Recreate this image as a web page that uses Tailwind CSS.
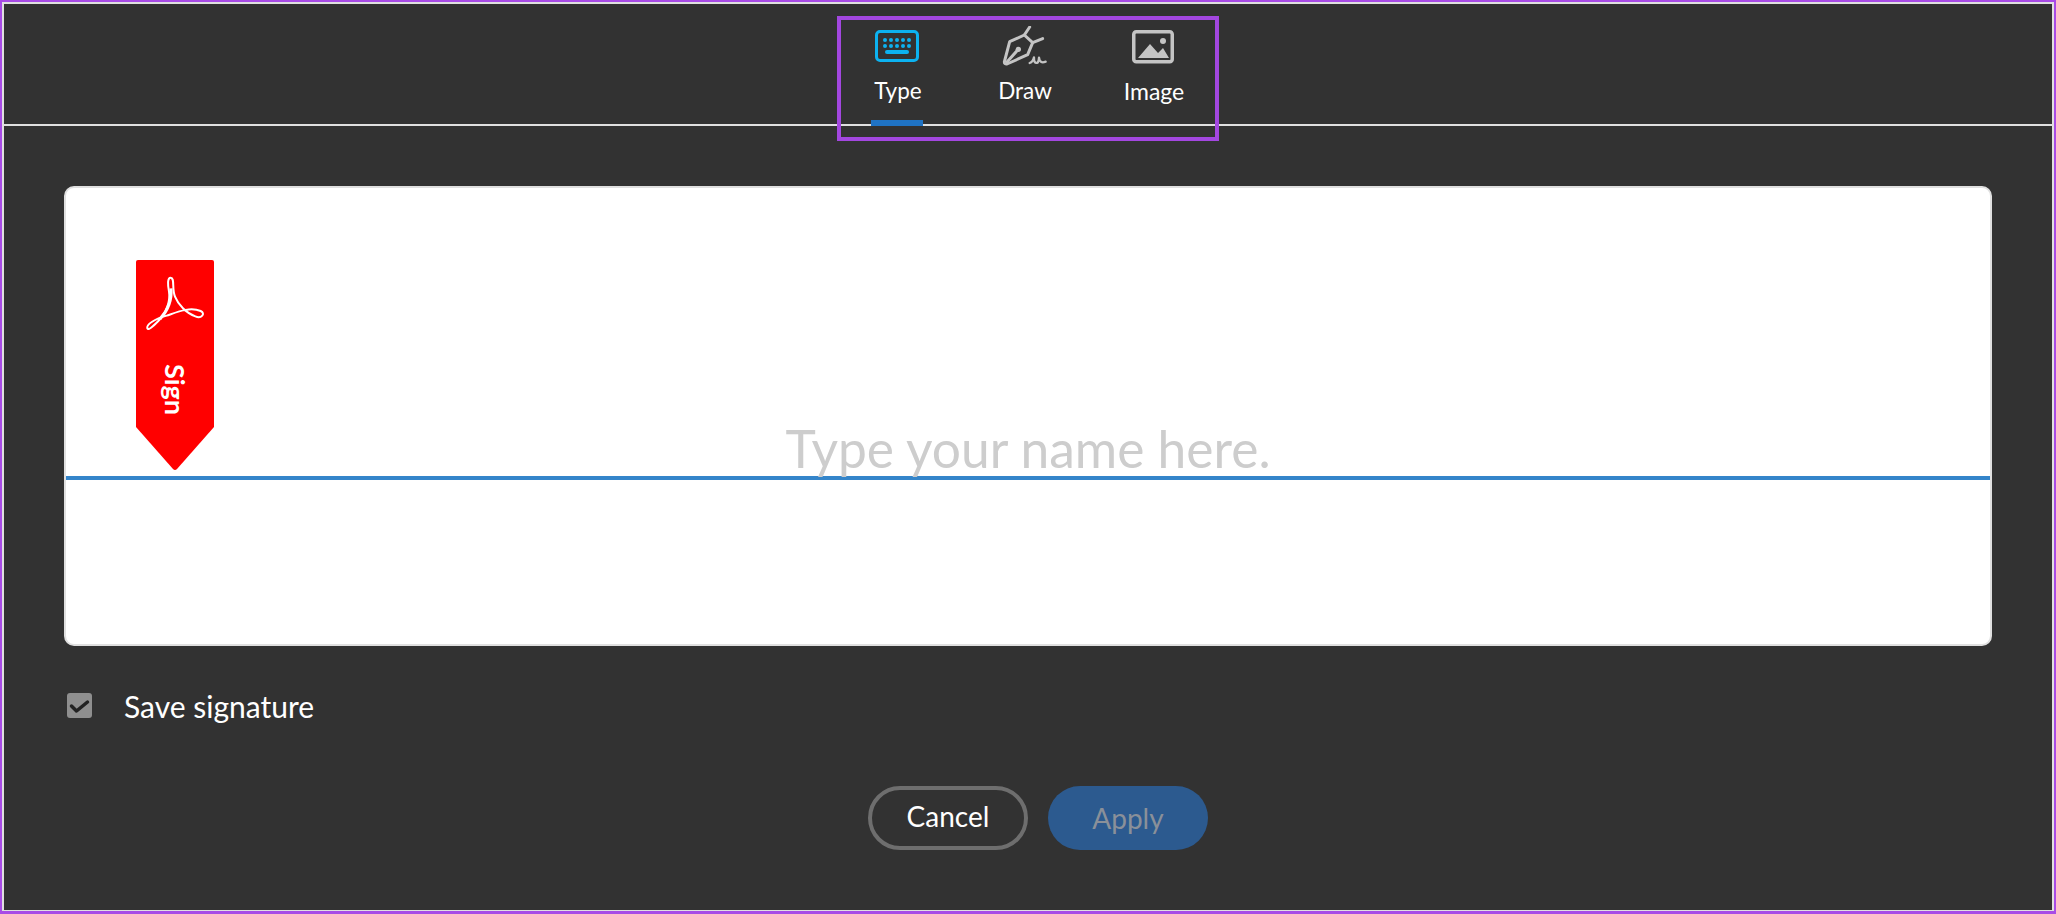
<!DOCTYPE html>
<html lang="en">

<head>
	<meta charset="UTF-8" />
	<meta name="viewport" content="width=device-width, initial-scale=1" />
	<title>Sign</title>
	<script src="https://cdn.jsdelivr.net/npm/@tailwindcss/browser@4"></script>
</head>

<body class="bg-[#323232] font-['Lato',sans-serif]">
	<div class="w-[2056px] h-[914px] box-border border-2 border-b-[3px] border-[#a84be6]">
		<div class="relative h-full box-border border-2 border-b border-[#e0e0e0] bg-[#323232] text-white">

			<!-- tabs -->
			<div class="h-[122px] box-border border-b-2 border-[#e0e0e0] flex justify-center">
				<div class="h-[122px] box-border w-[52px] pt-[22px] border-b-[6px] border-[#1f73c4] flex flex-col items-center">
					<div class="h-[40px] flex items-center">
						<svg width="44" height="32" viewBox="0 0 44 32">
							<rect x="1.5" y="1.5" width="41" height="29" rx="3.5" fill="none" stroke="#0cb2f0" stroke-width="3" />
							<g fill="#0cb2f0">
								<circle cx="10" cy="10" r="2" /><circle cx="16" cy="10" r="2" /><circle cx="22" cy="10" r="2" /><circle cx="28" cy="10" r="2" /><circle cx="34" cy="10" r="2" />
								<circle cx="10" cy="16" r="2" /><circle cx="16" cy="16" r="2" /><circle cx="22" cy="16" r="2" /><circle cx="28" cy="16" r="2" /><circle cx="34" cy="16" r="2" />
								<rect x="10" y="20" width="24" height="4" rx="2" />
							</g>
						</svg>
					</div>
					<span class="mt-[11px] pl-[2px] text-[22.5px] leading-[28px] whitespace-nowrap">Type</span>
				</div>
				<div class="ml-[76px] h-[122px] box-border w-[52px] pt-[22px] flex flex-col items-center">
					<div class="h-[40px] flex items-center">
						<svg width="48" height="40" viewBox="36 18 144 120">
							<g fill="none" stroke="#c4c4c4" stroke-width="9" stroke-linecap="round" stroke-linejoin="round">
								<path d="M106 45 L62 65 L46 126 Q46 133 54 132 L116 104 L131 68 Z" />
								<path d="M54 126 L86 90" />
								<path d="M106 45 L122 21" />
								<path d="M131 68 L161 56" />
								<path d="M122 129 Q132 126 135 112 Q134 132 146 128 Q150 122 150 113 Q152 132 170 125" stroke-width="7" />
							</g>
							<circle cx="88" cy="88" r="8" fill="#c4c4c4" />
						</svg>
					</div>
					<span class="mt-[11px] text-[22.5px] leading-[28px] whitespace-nowrap">Draw</span>
				</div>
				<div class="ml-[72px] h-[122px] box-border w-[62px] pt-[22px] flex flex-col items-center">
					<div class="h-[40px] flex items-center mr-[2px]">
						<svg width="42" height="34" viewBox="0 0 42 34" class="mt-[2px]">
							<rect x="1.75" y="1.75" width="38.5" height="30" rx="2.5" fill="none" stroke="#c4c4c4" stroke-width="3.5" />
							<path d="M6 28 L18 14 L26 23 L31 18 L37 28 Z" fill="#c4c4c4" />
							<circle cx="31" cy="11" r="3" fill="#c4c4c4" />
						</svg>
					</div>
					<span class="mt-[11px] text-[23px] leading-[28px] whitespace-nowrap">Image</span>
				</div>
			</div>

			<!-- signature box -->
			<div class="relative mt-[60px] ml-[60px] mr-[60px] h-[460px] box-border bg-white border-2 border-[#e0e0e0] rounded-[10px]">
				<div class="absolute left-0 right-0 top-[288px] h-[4px] bg-[#3485ca]"></div>
				<div class="absolute left-[70px] top-[72px] w-[78px] h-[211px]">
					<svg width="78" height="211" viewBox="0 0 78 211" class="absolute inset-0">
						<path d="M2 0 H76 Q78 0 78 2 V167 L41 209 Q39 211 37 209 L0 167 V2 Q0 0 2 0 Z" fill="#ff0000" />
						<g fill="none" stroke="#fff" transform="translate(-6 -5) scale(0.3333)">
							<path d="M122 68 C112 68 113 90 117 110 C122 140 108 175 85 198 C70 213 55 228 52 220 C48 208 75 192 110 182 C145 170 180 155 212 168 C228 176 214 192 196 184 C170 175 145 150 135 125 C125 100 135 68 122 68 Z" stroke-width="6" />
							<path d="M123 100 C126 135 112 168 90 192" stroke-width="9" />
						</g>
					</svg>
					<span class="absolute left-[39px] top-[104px] -translate-x-1/2 [writing-mode:vertical-rl] text-[27px] leading-[27px] font-bold">Sign</span>
				</div>
				<div class="relative pt-[228px] text-center text-[51.5px] leading-[64px] text-[#cdcdcd] whitespace-nowrap">Type your name here.</div>
			</div>

			<!-- save -->
			<div class="mt-[47px] ml-[63px] h-[25px] flex items-center gap-[32px]">
				<div class="w-[25px] h-[25px] rounded-[3px] bg-[#8f8f8f] flex items-center justify-center">
					<svg width="25" height="25" viewBox="0 0 25 25">
						<path d="M4.5 13 L9.5 18 L20.5 9" fill="none" stroke="#222" stroke-width="3.5" stroke-linecap="round" stroke-linejoin="round" />
					</svg>
				</div>
				<span class="text-[30px] leading-[34px] whitespace-nowrap">Save signature</span>
			</div>

			<!-- actions -->
			<div class="mt-[68px] pl-[20px] flex justify-center gap-[20px]">
				<button class="w-[160px] h-[64px] box-border rounded-full border-4 border-[#6e6e6e] text-[28px] leading-[52px] pb-[4px] text-white">Cancel</button>
				<button class="w-[160px] h-[64px] rounded-full bg-[#2c5a8f] text-[28px] leading-[64px] pb-[4px] text-[#8a9099]">Apply</button>
			</div>

			<!-- annotation -->
			<div class="absolute left-[833px] top-[12px] w-[382px] h-[125px] box-border border-4 border-[#a347e0]"></div>
		</div>
	</div>
</body>

</html>
